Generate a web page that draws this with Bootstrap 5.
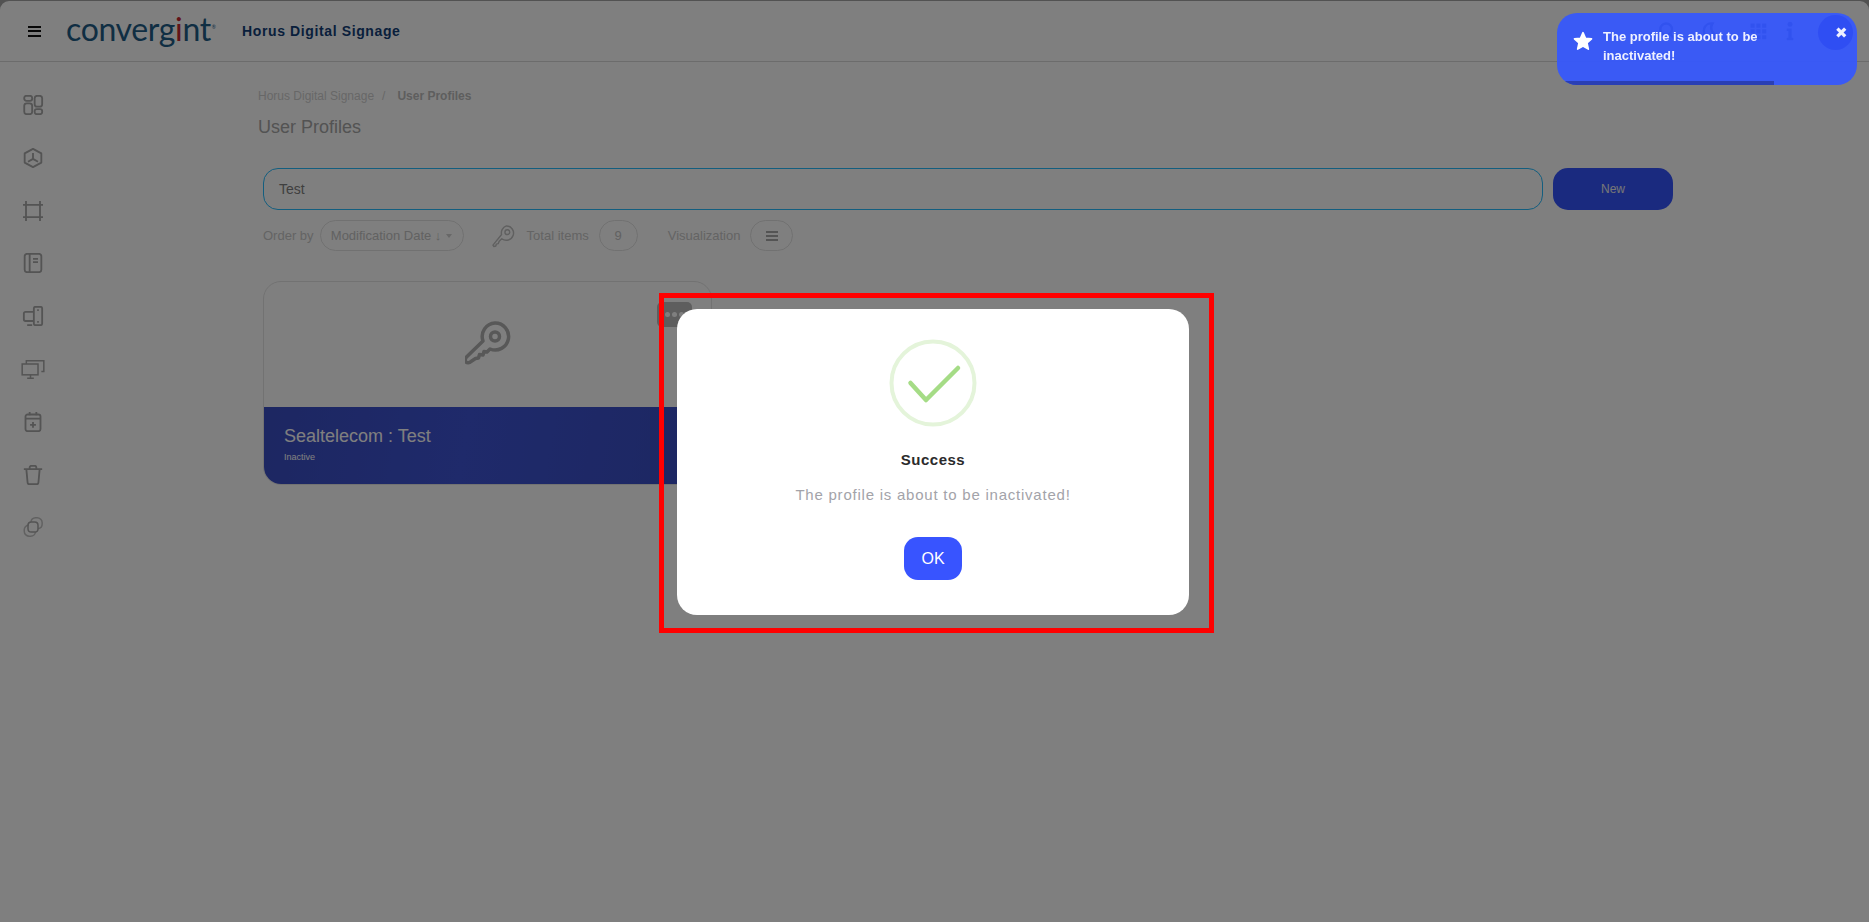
<!DOCTYPE html>
<html lang="en">
<head>
  <meta charset="UTF-8">
  <title>User Profiles</title>
  <link href="https://cdn.jsdelivr.net/npm/bootstrap@5.3.3/dist/css/bootstrap.min.css" rel="stylesheet">
  <style>
    html, body { height: 100%; overflow: hidden; }
    body { font-family: "Liberation Sans", Arial, sans-serif; background: #a4a4a4; color: #a0a0a0; padding-top: 1px; }

    .page-shell { background: #fff; height: 100%; border-radius: 9px 9px 0 0; }
    .top-head { height: 61px; border-bottom: 1px solid #d8d8d8; padding-left: 28px; }
    .burger { width: 13px; height: 11px; border-top: 2px solid #111; border-bottom: 2px solid #111; position: relative; }
    .burger::after { content: ""; position: absolute; left: 0; right: 0; top: 2.5px; height: 2px; background: #111; }
    .logo-word { font-family: Lato, sans-serif; font-weight: 400; font-size: 32px; letter-spacing: -.35px; line-height: 1; color: #1f5c86; margin-left: 25px; width: 151px; position: relative; top: -2px; white-space: nowrap; }
    .logo-i { color: #c4262e; }
    .logo-tm { font-size: 5px; vertical-align: super; margin-left: 1px; }
    .app-name { font-weight: 700; font-size: 14px; letter-spacing: .62px; color: #123f78; margin-left: 25px; }
    .head-tools { margin-left: auto; width: 212px; color: #0a2a5a; }
    .head-tools svg { width: 20px; height: 20px; margin-right: 23px; }
    .head-tools .tool-grid { margin: 0 12px 0 5px; }

    .side-rail { width: 66px; padding-top: 33px; gap: 32.8px; }
    .side-rail svg { width: 24px; height: 20px; color: #a8a8a8; display: block; margin: 0 auto; }
    .main-pane { padding: 27px 0 0 192px; width: 1607px; }
    .crumbs { font-size: 12px; color: #cfcfcf; line-height: 14px; }
    .crumbs b { color: #bdbdbd; margin-left: 12px; }
    .crumbs i { font-style: normal; margin-left: 8px; }
    .page-title { font-size: 18px; font-weight: 400; color: #a6a6a6; line-height: 22px; margin: 13px 0 0; }

    .search-row { margin: 30px 0 0 5px; gap: 10px; }
    .search-box { height: 42px; border: 1px solid #26bcff; border-radius: 15px; flex: 1; padding: 0 15px; font-size: 14px; color: #7e7e7e; display: flex; align-items: center; }
    .new-btn { width: 120px; height: 42px; background: #3454fe; color: #eee; border: 0; border-radius: 15px; font-size: 12px; padding: 0; }

    .order-row { margin: 10px 0 0 5px; height: 31px; font-size: 13px; color: #c8c8c8; }
    .pill-box { height: 31px; border: 1px solid #e2e2e2; border-radius: 16px; display: flex; align-items: center; justify-content: center; color: #c4c4c4; }
    .pill-order { width: 144px; margin-left: 6px; }
    .pill-count { width: 39px; margin-left: 10px; }
    .pill-view { width: 43px; margin-left: 10px; }
    .label-view { margin-left: 30px; }
    .key-small { width: 23px; height: 24px; margin-left: 28px; margin-right: 12px; color: #c0c0c0; }
    .caret-small { width: 0; height: 0; border: 3px solid transparent; border-top: 4px solid #d0d0d0; margin: 3px 0 0 5px; }
    .lines-icon { width: 12px; height: 10px; border-top: 2px solid #a8a8a8; border-bottom: 2px solid #a8a8a8; position: relative; }
    .lines-icon::after { content: ""; position: absolute; left: 0; right: 0; top: 2px; height: 2px; background: #a8a8a8; }

    .profile-tile { width: 449px; height: 204px; margin: 30px 0 0 5px; border: 1px solid #e4e4e4; border-radius: 18px; overflow: hidden; position: relative; }
    .tile-top { height: 125px; }
    .tile-top svg { width: 46px; height: 46px; color: #b0b0b0; margin-top: -2px; }
    .tile-bottom { height: 77px; padding: 18px 0 0 20px; color: #fff; background: linear-gradient(100deg, #3a4ec4, #3e54d6 45%, #3a4ec4); }
    .tile-name { font-size: 18px; line-height: 22px; }
    .tile-state { font-size: 9px; line-height: 12px; margin-top: 4px; }
    .dots-btn { position: absolute; top: 20px; right: 19px; width: 35px; height: 25px; background: #bcbcbc; border-radius: 5px; gap: 2px; }
    .dots-btn span { width: 5px; height: 5px; border-radius: 50%; background: #fff; }

    .dim-layer { position: fixed; inset: 0; background: rgba(0, 0, 0, .5); }
    .alert-box { width: 512px; height: 306px; background: #fff; border-radius: 20px; padding-top: 30px; position: relative; top: 1px; left: -1.5px; }
    .ok-ring { width: 88px; height: 88px; display: block; }
    .alert-title { font-weight: 700; font-size: 15px; letter-spacing: .5px; color: #2b2b2b; line-height: 20px; margin-top: 23px; }
    .alert-text { font-size: 15px; letter-spacing: .77px; color: #a3a3a9; line-height: 20px; margin-top: 15px; }
    .ok-btn { width: 58px; height: 43px; margin-top: 32px; background: #3854ff; color: #fff; border: 0; border-radius: 14px; font-size: 16px; padding: 0; }

    .toast-box { position: fixed; top: 13px; left: 1557px; width: 300px; height: 72px; background: rgba(53, 87, 254, .93); border-radius: 20px; overflow: hidden; color: #eef0ff; font-weight: 700; font-size: 13px; line-height: 19px; padding: 14px 0 0 46px; }
    .toast-star { position: absolute; left: 16px; top: 18px; width: 20px; height: 20px; color: #fff; }
    .toast-close { position: absolute; left: 261px; top: 2px; width: 35px; height: 35px; border-radius: 50%; background: rgba(32, 60, 240, .4); }
    .toast-x { position: absolute; left: 278px; top: 11px; font-size: 15px; line-height: 18px; color: #eef0ff; font-family: "DejaVu Sans", sans-serif; }
    .toast-bar { position: absolute; left: 0; bottom: 0; height: 4px; width: 217px; background: #2a3fb4; }

    .red-frame { position: fixed; left: 659px; top: 293px; width: 555px; height: 340px; border: 5px solid #f00; pointer-events: none; }
  </style>
</head>
<body>

  <div class="page-shell">
  <!-- Cabecera -->
  <header class="top-head d-flex align-items-center">
    <div class="burger"></div>
    <div class="logo-word">converg<span class="logo-i">i</span>nt<span class="logo-tm">®</span></div>
    <div class="app-name">Horus Digital Signage</div>
    <div class="head-tools d-flex align-items-center">
      <svg viewBox="0 0 24 24" fill="none" stroke="currentColor" stroke-width="3"><circle cx="11" cy="10" r="7"/><path d="M16 16l5 5"/></svg>
      <svg viewBox="0 0 24 24" fill="none" stroke="currentColor" stroke-width="3"><path d="M15 3a9 9 0 1 0 6 14 9 9 0 0 1-6-14z"/></svg>
      <svg class="tool-grid" viewBox="0 0 24 24" fill="currentColor"><path d="M3 3h5v5H3zM10 3h5v5h-5zM17 3h5v5h-5zM3 10h5v5H3zM10 10h5v5h-5zM17 10h5v5h-5zM3 17h5v5H3zM10 17h5v5h-5zM17 17h5v5h-5z"/></svg>
      <svg viewBox="0 0 24 24" fill="currentColor"><circle cx="12" cy="4" r="3"/><path d="M8 9h6v11h2v3H8v-3h2v-8H8z"/></svg>
    </div>
  </header>

  <div class="d-flex">
    <!-- Menu lateral -->
    <nav class="side-rail d-flex flex-column flex-shrink-0">
      <svg viewBox="0 0 24 24" fill="none" stroke="currentColor" stroke-width="2.2"><rect x="1.500" y="1" width="9.500" height="6" rx="2.500"/><rect x="1.500" y="10" width="9.500" height="13" rx="3"/><rect x="14" y="1" width="9" height="13" rx="3"/><rect x="14" y="17" width="9" height="6" rx="2.500"/></svg>
      <svg viewBox="0 0 24 24" fill="none" stroke="currentColor" stroke-width="2.2" stroke-linejoin="round"><path d="M12 1l10 5.500v11L12 23 2 17.500v-11z"/><path d="M12 6v7M12 13l-6 3.500M12 13l6 3.500"/></svg>
      <svg viewBox="0 0 24 24" fill="none" stroke="currentColor" stroke-width="2.2"><path d="M3.600 0v24M20.400 0v24M0 4.600h24M0 19.400h24"/></svg>
      <svg viewBox="0 0 24 24" fill="none" stroke="currentColor" stroke-width="2.2"><rect x="2" y="1" width="20" height="22" rx="3"/><path d="M8 1v22M12 7h6M12 11h6"/></svg>
      <svg viewBox="0 0 24 24" fill="none" stroke="currentColor" stroke-width="2.2"><rect x="13" y="1" width="10" height="22" rx="2"/><path d="M17 5h2M17 19h2M13 7H3a2 2 0 0 0-2 2v7a2 2 0 0 0 2 2h10M5 23h6"/></svg>
      <svg viewBox="0 0 28 24" fill="none" stroke="currentColor" stroke-width="1.800"><rect x="1" y="6" width="19" height="13"/><path d="M7 23h8M11 19v4M6 6V2h21v13h-3"/></svg>
      <svg viewBox="0 0 24 24" fill="none" stroke="currentColor" stroke-width="2.2"><rect x="3" y="3" width="18" height="20" rx="2.500"/><path d="M3 8h18M8 0v4M16 0v4M12 12v7M8.500 15.500h7"/></svg>
      <svg viewBox="0 0 24 24" fill="none" stroke="currentColor" stroke-width="2.2" stroke-linejoin="round"><path d="M1 5h22M4 5l1.500 16a2 2 0 0 0 2 2h9a2 2 0 0 0 2-2L20 5M8 5V3a2 2 0 0 1 2-2h4a2 2 0 0 1 2 2v2"/></svg>
      <svg viewBox="0 0 24 24" fill="none" stroke="currentColor" stroke-width="1.800"><path d="M7 9.500A6 6 0 0 0 1.500 16v1A6 6 0 0 0 8 23h1a6 6 0 0 0 6-5" opacity=".7"/><path d="M9.500 6A6 6 0 0 1 15 1h2a6 6 0 0 1 6 6v1a6 6 0 0 1-5 6" opacity=".7"/><rect x="6" y="6" width="12" height="12" rx="4"/></svg>
    </nav>

    <main class="main-pane flex-shrink-0">
      <div class="crumbs">Horus Digital Signage<i>/</i><b>User Profiles</b></div>
      <h1 class="page-title">User Profiles</h1>

      <div class="search-row d-flex">
        <div class="search-box">Test</div>
        <button class="new-btn" type="button">New</button>
      </div>

      <div class="order-row d-flex align-items-center">
        <span>Order by</span>
        <div class="pill-box pill-order">Modification Date ↓<span class="caret-small"></span></div>
        <svg class="key-small" viewBox="0 0 24 24" fill="none" stroke="currentColor" stroke-width="1.500" stroke-linejoin="round"><path d="M15 1.500a7.500 7.500 0 1 1-4.800 13.300L7.500 17.500l-1 2.500-2 .5-.5 2-2 .5-1-1.500L10 10.500A7.500 7.500 0 0 1 15 1.500z"/><circle cx="16" cy="8" r="2.500"/></svg>
        <span>Total items</span>
        <div class="pill-box pill-count">9</div>
        <span class="label-view">Visualization</span>
        <div class="pill-box pill-view"><span class="lines-icon"></span></div>
      </div>

      <div class="profile-tile">
        <div class="tile-top d-flex align-items-center justify-content-center">
          <svg viewBox="0 0 46 46" fill="none" stroke="currentColor" stroke-width="3.500" stroke-linejoin="round"><path d="M30 2a13.500 13.500 0 1 1-5 26l-3 3-3-.5-1 3.500-3.500-.5-1 3.500-3 .5-4.500 3c-1.500 1.500-4 1.500-5 .5s-1-3.500.5-5L18 20A13.500 13.500 0 0 1 30 2z"/><circle cx="30" cy="15.500" r="4.500"/></svg>
        </div>
        <div class="tile-bottom">
          <div class="tile-name">Sealtelecom : Test</div>
          <div class="tile-state">Inactive</div>
        </div>
        <div class="dots-btn d-flex align-items-center justify-content-center"><span></span><span></span><span></span></div>
      </div>
    </main>
  </div>
  </div>

  <!-- Fondo oscuro y alerta -->
  <div class="dim-layer d-flex align-items-center justify-content-center">
    <div class="alert-box d-flex flex-column align-items-center">
      <svg class="ok-ring" viewBox="0 0 88 88" fill="none">
        <circle cx="44" cy="44" r="41.500" stroke="#e4f4da" stroke-width="4"/>
        <path d="M21.500 44L37 61 69 29" stroke="#a5dc86" stroke-width="4.500" stroke-linecap="round" stroke-linejoin="round"/>
      </svg>
      <div class="alert-title">Success</div>
      <div class="alert-text">The profile is about to be inactivated!</div>
      <button class="ok-btn" type="button">OK</button>
    </div>
  </div>

  <div class="toast-box">
    <div class="toast-close"></div>
    <svg class="toast-star" viewBox="0 0 24 24" fill="currentColor" stroke="currentColor" stroke-width="2" stroke-linejoin="round"><path d="M12 2l3 6.800 7.200.7-5.400 4.900 1.600 7.300L12 18l-6.400 3.700 1.600-7.300L1.800 9.500 9 8.800z"/></svg>
    <div>The profile is about to be<br>inactivated!</div>
    <div class="toast-x">✖</div>
    <div class="toast-bar"></div>
  </div>

  <div class="red-frame"></div>

</body>
</html>
